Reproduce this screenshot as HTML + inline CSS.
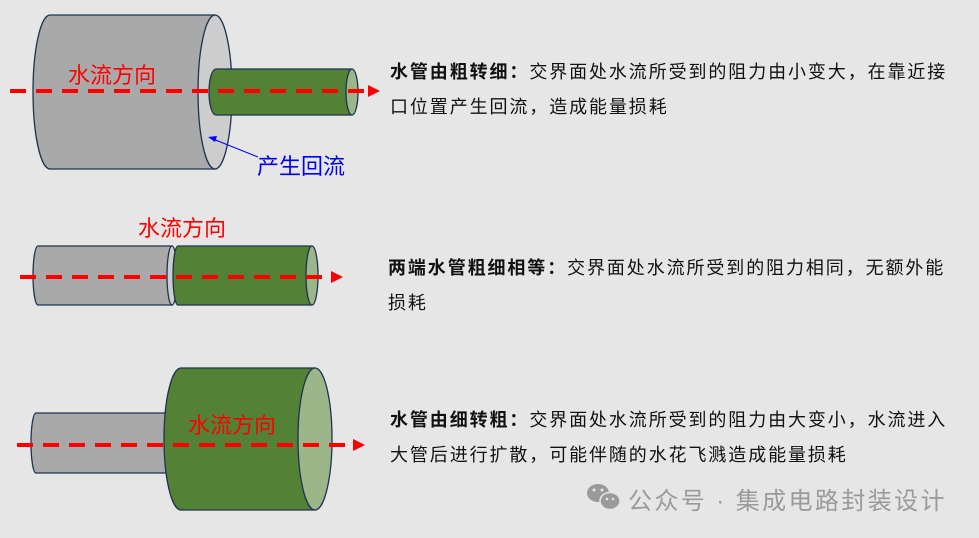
<!DOCTYPE html>
<html><head><meta charset="utf-8"><style>
html,body{margin:0;padding:0;}
body{width:979px;height:538px;background:#e6e6e6;position:relative;overflow:hidden;font-family:"Liberation Sans","Noto Sans CJK SC",sans-serif;}
.t{position:absolute;font-size:18px;letter-spacing:1.9px;line-height:35px;color:#111;white-space:nowrap;}
.t b{font-weight:bold;}
svg{position:absolute;left:0;top:0;}
.wm{position:absolute;left:628px;top:481px;font-size:24px;color:#9a9a9a;letter-spacing:2.4px;white-space:nowrap;}
</style></head><body>
<svg width="979" height="538" viewBox="0 0 979 538">
<g stroke="#1f3350" stroke-width="1.3">
<path d="M50 15 L215 15 L215 169 L50 169 A17 77 0 0 1 50 15 Z" fill="#a9a9a9"/>
<ellipse cx="215" cy="92" rx="17" ry="77" fill="#cdcdcd"/>
<path d="M216 69 L352 69 L352 115 L216 115 A7 23 0 0 1 216 69 Z" fill="#538135"/>
<ellipse cx="352" cy="92" rx="6" ry="23" fill="#9bb78a"/>
<path d="M38 246 L172 246 L172 305 L38 305 A5 29.5 0 0 1 38 246 Z" fill="#a9a9a9"/>
<ellipse cx="172" cy="275.5" rx="5" ry="29.5" fill="#cdcdcd"/>
<path d="M178 246 L312 246 L312 305 L178 305 A5 29.5 0 0 1 178 246 Z" fill="#538135"/>
<ellipse cx="312" cy="275.5" rx="6" ry="29.5" fill="#9bb78a"/>
<path d="M36 413 L170 413 L170 473 L36 473 A5 30 0 0 1 36 413 Z" fill="#a9a9a9"/>
<path d="M181 368 L315 368 L315 510 L181 510 A17 71 0 0 1 181 368 Z" fill="#538135"/>
<ellipse cx="315" cy="439" rx="17" ry="71" fill="#9bb78a"/>
</g>
<g stroke="#ff0000" stroke-width="4" stroke-dasharray="16 10" fill="none">
<line x1="10" y1="91" x2="368" y2="91"/>
<line x1="20" y1="277" x2="330" y2="277"/>
<line x1="17" y1="445" x2="352" y2="445"/>
</g>
<g fill="#ff0000">
<polygon points="368,85 380,91 368,97"/>
<polygon points="331,271 343,277 331,283"/>
<polygon points="353,439 365,445 353,451"/>
</g>
<line x1="258" y1="157" x2="213" y2="139" stroke="#0000ff" stroke-width="1"/>
<polygon points="208,137 217,136 215,142" fill="#0000ff"/>
<g font-family="Liberation Sans,Noto Sans CJK SC,sans-serif" font-size="22" fill="#ff0000">
<text x="68" y="83">水流方向</text>
<text x="138" y="236">水流方向</text>
<text x="188" y="433">水流方向</text>
</g>
<text x="257" y="174" font-family="Liberation Sans,Noto Sans CJK SC,sans-serif" font-size="22" fill="#0000ff">产生回流</text>
<g fill="#9a9a9a">
<ellipse cx="598" cy="493" rx="11" ry="9"/>
<ellipse cx="610" cy="501" rx="10" ry="8.5" stroke="#e6e6e6" stroke-width="1.5"/>
</g>
<g fill="#e6e6e6"><circle cx="594" cy="490" r="1.5"/><circle cx="602" cy="490" r="1.5"/><circle cx="607" cy="499" r="1.3"/><circle cx="613" cy="499" r="1.3"/></g>
</svg>
<div class="t" style="left:390px;top:55px;"><b>水管由粗转细：</b>交界面处水流所受到的阻力由小变大，在靠近接<br>口位置产生回流，造成能量损耗</div>
<div class="t" style="left:388px;top:251px;"><b>两端水管粗细相等：</b>交界面处水流所受到的阻力相同，无额外能<br>损耗</div>
<div class="t" style="left:390px;top:403px;"><b>水管由细转粗：</b>交界面处水流所受到的阻力由大变小，水流进入<br>大管后进行扩散，可能伴随的水花飞溅造成能量损耗</div>
<div class="wm">公众号 · 集成电路封装设计</div>
</body></html>
